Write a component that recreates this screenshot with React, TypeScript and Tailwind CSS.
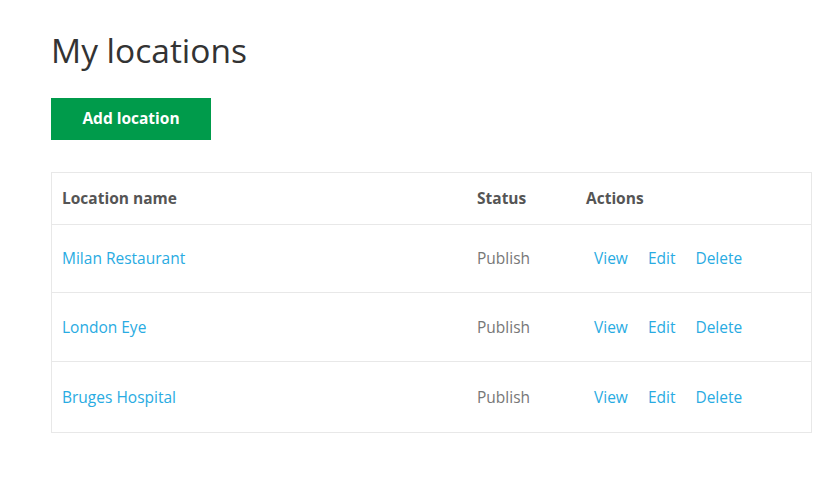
import React from "react";

const rows = ["Milan Restaurant", "London Eye", "Bruges Hospital"];
const heights = ["h-[68px]", "h-[69px]", "h-[71px]"];

export default function App() {
  return (
    <div className="min-h-[500px] w-full bg-white pl-[51px] pr-[19px] pt-[28px]" style={{ fontFamily: '"Open Sans", sans-serif' }}>
      <h1 className="text-[33.5px] leading-[44px] text-[#333333] font-normal">My locations</h1>
      <button className="mt-[26px] flex h-[42px] w-[160px] items-center justify-center bg-[#009b4b] text-[15.5px] font-bold text-white">
        Add location
      </button>
      <div className="mt-[32px] border border-[#e8e8e8] text-[15.5px]">
        <div className="flex h-[51px] items-center font-bold text-[#555555]">
          <div className="w-[425px] pl-[10px]">Location name</div>
          <div className="w-[109px]">Status</div>
          <div>Actions</div>
        </div>
        {rows.map((r, i) => (
          <div key={r} className={`flex items-center border-t border-[#e8e8e8] pt-[1px] ${heights[i]}`}>
            <div className="w-[425px] pl-[10px] text-[#29abe2]">{r}</div>
            <div className="w-[109px] text-[#777777]">Publish</div>
            <div className="flex gap-[20px] pl-[8px] text-[#29abe2]">
              <span>View</span>
              <span>Edit</span>
              <span>Delete</span>
            </div>
          </div>
        ))}
      </div>
    </div>
  );
}
